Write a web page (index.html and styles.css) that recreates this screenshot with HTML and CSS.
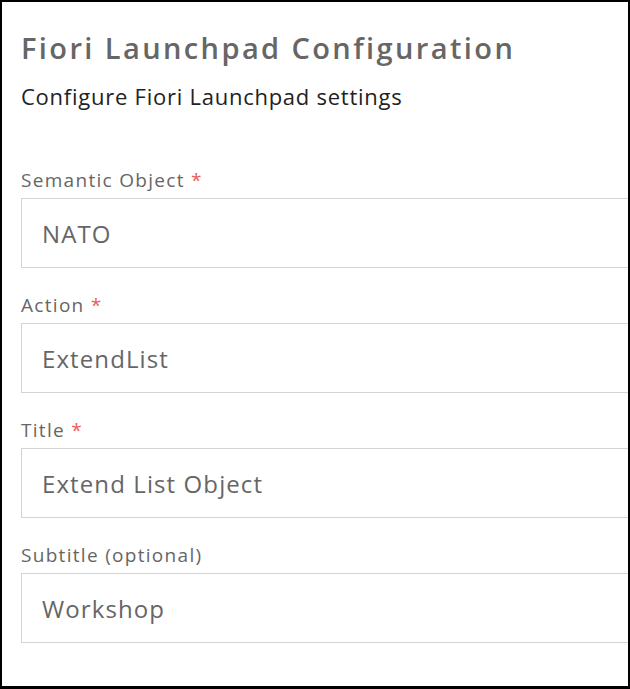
FILE: index.html
```html
<!DOCTYPE html>
<html>
<head>
<meta charset="utf-8">
<link rel="stylesheet" href="styles.css">
</head>
<body>
<div class="frame">
  <h1 class="title">Fiori Launchpad Configuration</h1>
  <p class="subtitle">Configure Fiori Launchpad settings</p>
  <div class="form">
    <div class="field">
      <label class="label">Semantic Object <span class="req">*</span></label>
      <div class="input">NATO</div>
    </div>
    <div class="field">
      <label class="label">Action <span class="req">*</span></label>
      <div class="input">ExtendList</div>
    </div>
    <div class="field">
      <label class="label">Title <span class="req">*</span></label>
      <div class="input">Extend List Object</div>
    </div>
    <div class="field">
      <label class="label">Subtitle (optional)</label>
      <div class="input">Workshop</div>
    </div>
  </div>
</div>
</body>
</html>
```
FILE: styles.css
```css
* { box-sizing: border-box; }
html, body { margin: 0; padding: 0; background: #fff; }
.frame {
  width: 630px;
  height: 689px;
  border: 2px solid #000;
  border-bottom-width: 3px;
  overflow: hidden;
  padding: 27px 0 0 19px;
  font-family: "Open Sans", "Noto Sans", sans-serif;
}
.title {
  margin: 0;
  font-size: 29px;
  font-weight: 600;
  color: #666;
  line-height: 38px;
  letter-spacing: 2.4px;
  white-space: nowrap;
}
.subtitle {
  margin: 14px 0 0;
  font-size: 22px;
  color: #222;
  line-height: 30px;
  letter-spacing: 0.75px;
  white-space: nowrap;
}
.form {
  margin-top: 56px;
  display: flex;
  flex-direction: column;
  gap: 24px;
}
.field {
  display: flex;
  flex-direction: column;
  gap: 5px;
}
.label {
  font-size: 19px;
  color: #666;
  line-height: 26px;
  letter-spacing: 1.3px;
}
.req { color: #f05a5a; }
.input {
  width: 640px;
  height: 70px;
  border: 1px solid #d4d4d4;
  padding-left: 20px;
  display: flex;
  align-items: center;
  font-size: 24px;
  letter-spacing: 1.1px;
  color: #666;
}
```
